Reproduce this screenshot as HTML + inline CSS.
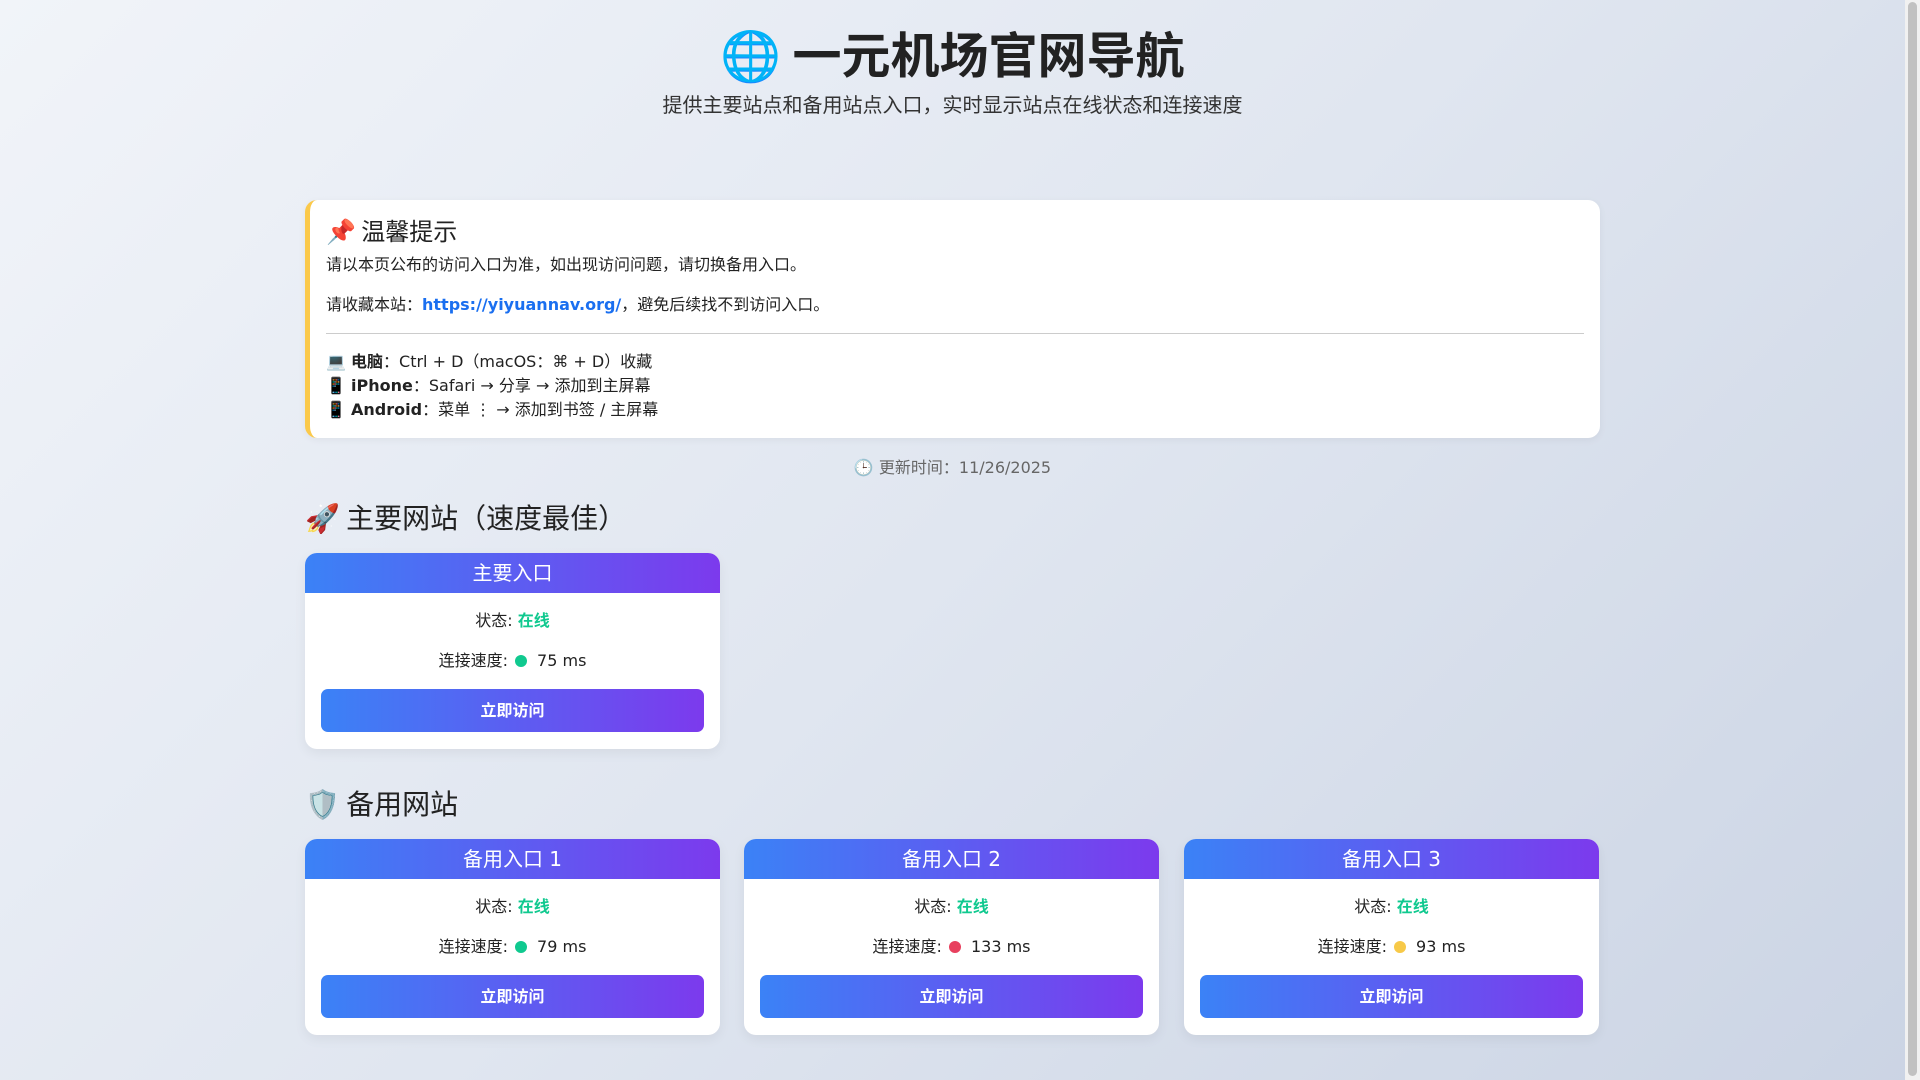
<!DOCTYPE html>
<html><head><meta charset="utf-8"><style>
*{box-sizing:border-box;margin:0;padding:0}
html,body{width:1920px;height:1080px;overflow:hidden}
body{font-family:"DejaVu Sans","Liberation Sans","Noto Sans CJK SC",sans-serif;background:linear-gradient(135deg,#f1f4f9 0%,#e0e6f0 50%,#cbd4e4 100%);color:#222;position:relative}
.sb{position:absolute;right:0;top:0;width:15px;height:1080px;background:#f1f1f1}
.sb div{position:absolute;left:3px;right:3px;top:2px;height:1074px;background:#c1c1c1;border-radius:6px}
h1{position:absolute;left:0;width:1905px;top:17px;text-align:center;font-size:49px;font-weight:bold;color:#222;font-family:"Noto Sans CJK SC",sans-serif}
.sub{position:absolute;left:0;width:1905px;top:89px;text-align:center;font-size:20px;color:#333;font-family:"Noto Sans CJK SC",sans-serif}
.notice{position:absolute;left:305px;top:200px;width:1295px;height:238px;background:#fff;border-radius:12px;border-left:5px solid #fbc94a;padding:14px 16px 0 16px;font-size:16px;box-shadow:0 2px 8px rgba(0,0,0,.05)}
.notice h3{font-size:24px;font-weight:normal;line-height:32px;font-family:"Noto Sans CJK SC",sans-serif}
.notice p{line-height:24px}
.notice a{color:#1a6ff0;font-weight:bold;text-decoration:none}
hr{border:0;border-top:1px solid #ccc;margin:16px 0 16px}
.upd{position:absolute;left:0;width:1905px;top:454px;text-align:center;color:#666;font-size:16px}
.sec{position:absolute;left:305px;font-size:28px;font-family:"Noto Sans CJK SC",sans-serif;color:#222}
.card{position:absolute;width:415px;height:196px;background:#fff;border-radius:12px;overflow:hidden;box-shadow:0 4px 12px rgba(0,0,0,.06);text-align:center;font-size:16px}
.ch{height:40px;line-height:40px;color:#fff;font-size:20px;background:linear-gradient(90deg,#3b82f6,#7c3aed)}
.st{margin-top:16px;line-height:24px}
.st b{color:#10c98f}
.sp{margin-top:16px;line-height:24px}
.dot{display:inline-block;width:12px;height:12px;border-radius:50%;vertical-align:-1px;margin:0 10px 0 2px}
.btn{margin:16px 16px 0;height:43px;line-height:43px;border-radius:7px;color:#fff;font-weight:bold;background:linear-gradient(90deg,#3b82f6,#7c3aed)}
</style></head><body>
<h1>🌐 一元机场官网导航</h1>
<div class="sub">提供主要站点和备用站点入口，实时显示站点在线状态和连接速度</div>
<div class="notice">
<h3>📌 温馨提示</h3>
<p style="margin-top:7px">请以本页公布的访问入口为准，如出现访问问题，请切换备用入口。</p>
<p style="margin-top:16px">请收藏本站：<a>https://yiyuannav.org/</a>，避免后续找不到访问入口。</p>
<hr>
<p>💻 <b>电脑</b>：Ctrl + D（macOS：⌘ + D）收藏</p>
<p>📱 <b>iPhone</b>：Safari → 分享 → 添加到主屏幕</p>
<p>📱 <b>Android</b>：菜单 ⋮ → 添加到书签 / 主屏幕</p>
</div>
<div class="upd">🕒 更新时间：11/26/2025</div>
<div class="sec" style="top:497px">🚀 主要网站（速度最佳）</div>
<div class="card" style="left:305px;top:553px"><div class="ch">主要入口</div><div class="st">状态: <b>在线</b></div><div class="sp">连接速度: <span class="dot" style="background:#10c98f"></span>75 ms</div><div class="btn">立即访问</div></div>
<div class="sec" style="top:783px">🛡️ 备用网站</div>
<div class="card" style="left:305px;top:839px"><div class="ch">备用入口 1</div><div class="st">状态: <b>在线</b></div><div class="sp">连接速度: <span class="dot" style="background:#10c98f"></span>79 ms</div><div class="btn">立即访问</div></div>
<div class="card" style="left:744px;top:839px"><div class="ch">备用入口 2</div><div class="st">状态: <b>在线</b></div><div class="sp">连接速度: <span class="dot" style="background:#e8405e"></span>133 ms</div><div class="btn">立即访问</div></div>
<div class="card" style="left:1184px;top:839px"><div class="ch">备用入口 3</div><div class="st">状态: <b>在线</b></div><div class="sp">连接速度: <span class="dot" style="background:#f7c948"></span>93 ms</div><div class="btn">立即访问</div></div>
<div class="sb"><div></div></div>
</body></html>
